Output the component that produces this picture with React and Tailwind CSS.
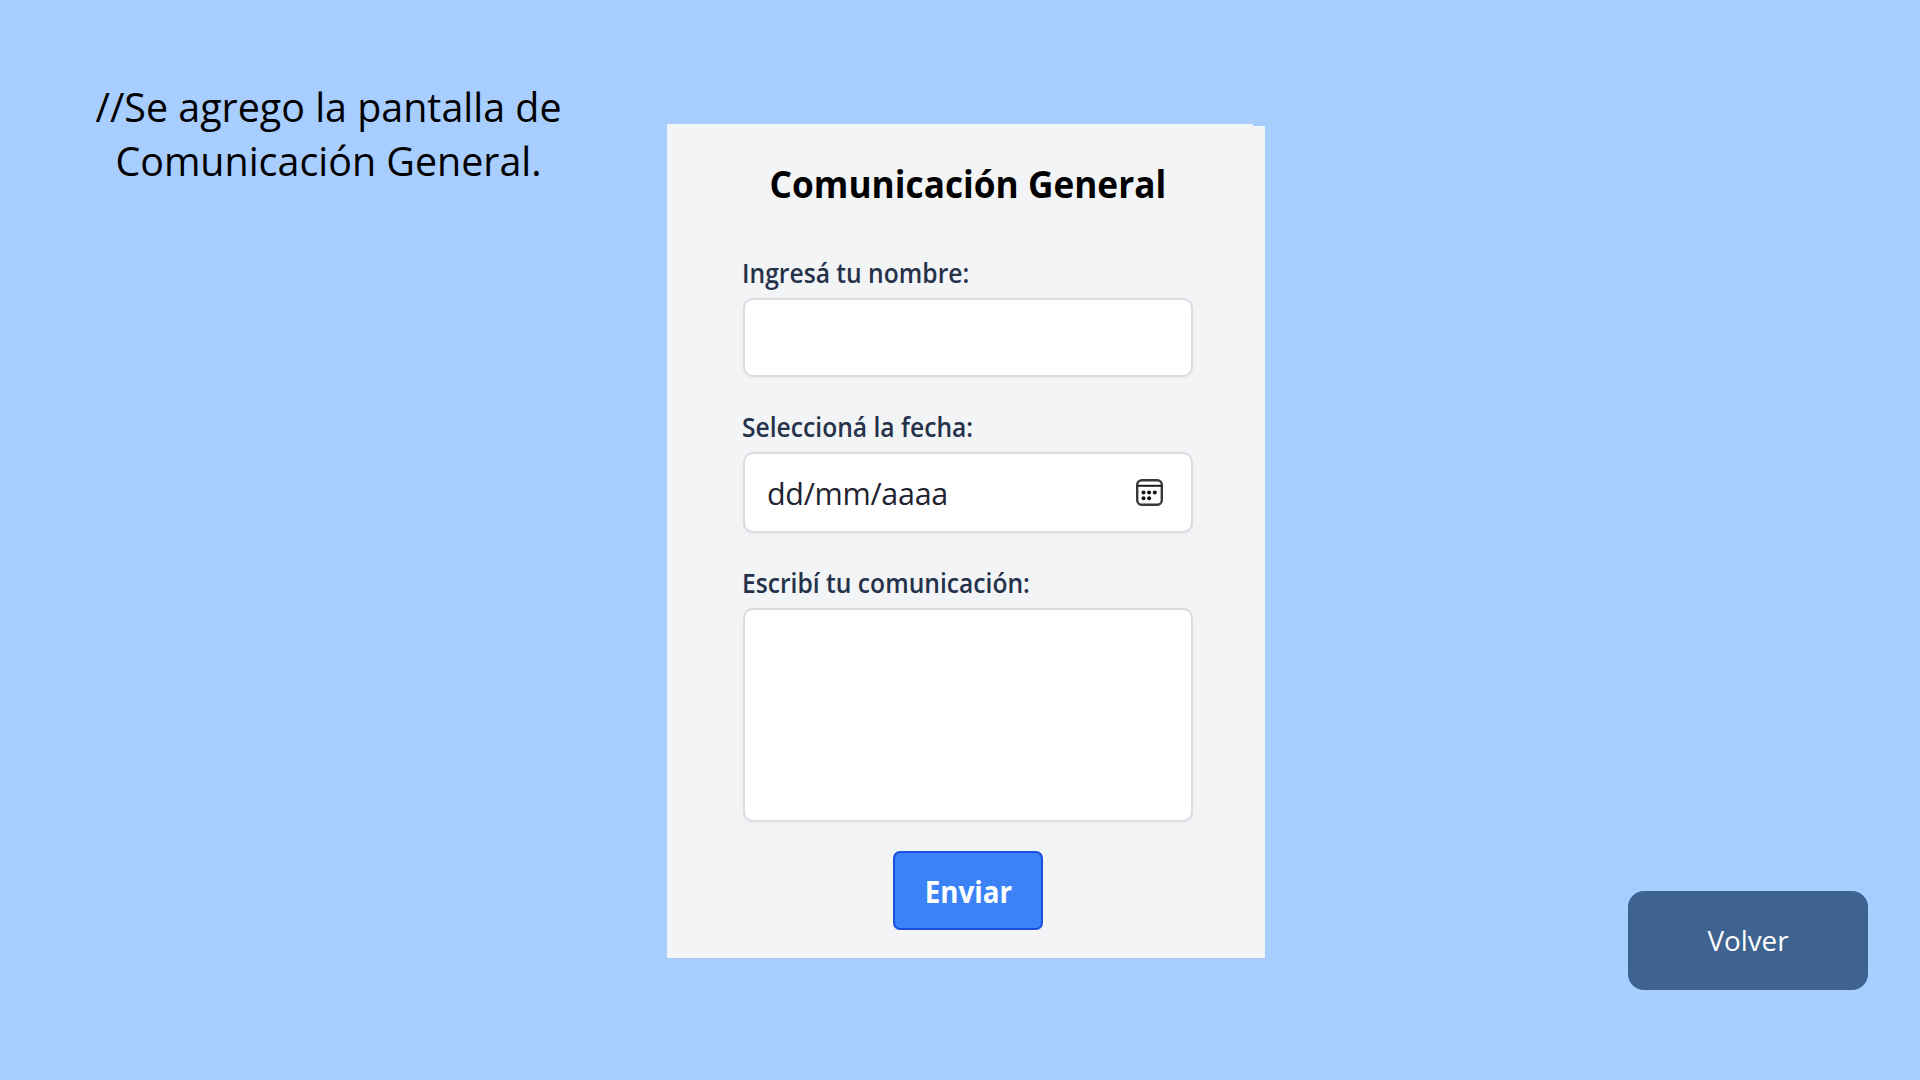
import React from "react";

const label = "-ml-px block h-[37px] origin-left scale-x-[0.923] leading-[38px] text-[26.7px] font-semibold text-[#25324a] whitespace-nowrap";
const field = "block w-full rounded-[10px] border-2 border-[#dadce2] bg-white shadow-[0_2px_3px_rgba(0,0,0,0.03)] outline-none";

function CalendarIcon() {
  return (
    <svg width="27" height="27" viewBox="0 0 27 27" fill="none">
      <rect x="1.2" y="1.2" width="24.6" height="24.6" rx="4.5" stroke="#3a3a3a" strokeWidth="2.4" />
      <path d="M1.5 6.8H25.5" stroke="#1c1c1c" strokeWidth="2" />
      <g fill="#111">
        <circle cx="7.5" cy="13.5" r="2" />
        <circle cx="13.1" cy="13.5" r="2" />
        <circle cx="18.8" cy="13.5" r="2" />
        <circle cx="7.5" cy="19.2" r="2" />
        <circle cx="13.1" cy="19.2" r="2" />
      </g>
    </svg>
  );
}

export default function App() {
  return (
    <main className="flex h-[1080px] w-[1920px] overflow-hidden bg-[#a8cdff] font-['Open_Sans','Noto_Sans',sans-serif]">
      <div className="w-[667px] shrink-0 pt-[80px]">
        <p className="w-[657px] text-center text-[39.4px] leading-[54.3px] text-black">
          //Se agrego la pantalla de
          <br />
          Comunicación General.
        </p>
      </div>

      <section className="flex w-[598px] shrink-0 flex-col pt-[124px]">
        <div className="h-[2px] w-[586px] rounded-tl-[3px] bg-[#f2f4f6]" />
        <form className="flex h-[832px] flex-col items-center bg-[#f2f4f6] pt-[33px] pl-[4px]" onSubmit={(e) => e.preventDefault()}>
          <h1 className="h-[48px] scale-x-[0.927] whitespace-nowrap text-[38px] leading-[48px] font-bold text-black">
            Comunicación General
          </h1>
          <div className="mt-[47px] flex w-[450px] flex-col gap-[31px]">
            <div className="flex flex-col gap-[7px]">
              <label htmlFor="nombre" className={label}>Ingresá tu nombre:</label>
              <input id="nombre" className={`${field} h-[79px] px-6`} />
            </div>
            <div className="flex flex-col gap-[7px]">
              <label className={label}>Seleccioná la fecha:</label>
              <div className={`${field} h-[81px]`}>
                <div className="flex h-full items-center justify-between pl-[22px] pr-[28px]">
                  <span className="pt-[1px] text-[30.5px] leading-[42px] tracking-[-0.3px] text-[#1f2430]">dd/mm/aaaa</span>
                  <CalendarIcon />
                </div>
              </div>
            </div>
            <div className="flex flex-col gap-[7px]">
              <label htmlFor="comunicacion" className={label}>Escribí tu comunicación:</label>
              <textarea id="comunicacion" className={`${field} h-[214px] resize-none p-6`} />
            </div>
          </div>
          <button className="mt-[29px] flex h-[79px] w-[150px] shrink-0 items-center justify-center rounded-[7px] border-2 border-[#1d50e0] bg-[#3b82f6] text-[29.5px] font-bold text-white">
            <span className="scale-x-[0.94] pt-[3px]">Enviar</span>
          </button>
        </form>
      </section>

      <div className="flex flex-1 items-start justify-end pt-[891px] pr-[52px]">
        <button className="h-[99px] w-[240px] rounded-[16px] bg-[#3e6390] text-[27.8px] text-white">Volver</button>
      </div>
    </main>
  );
}
